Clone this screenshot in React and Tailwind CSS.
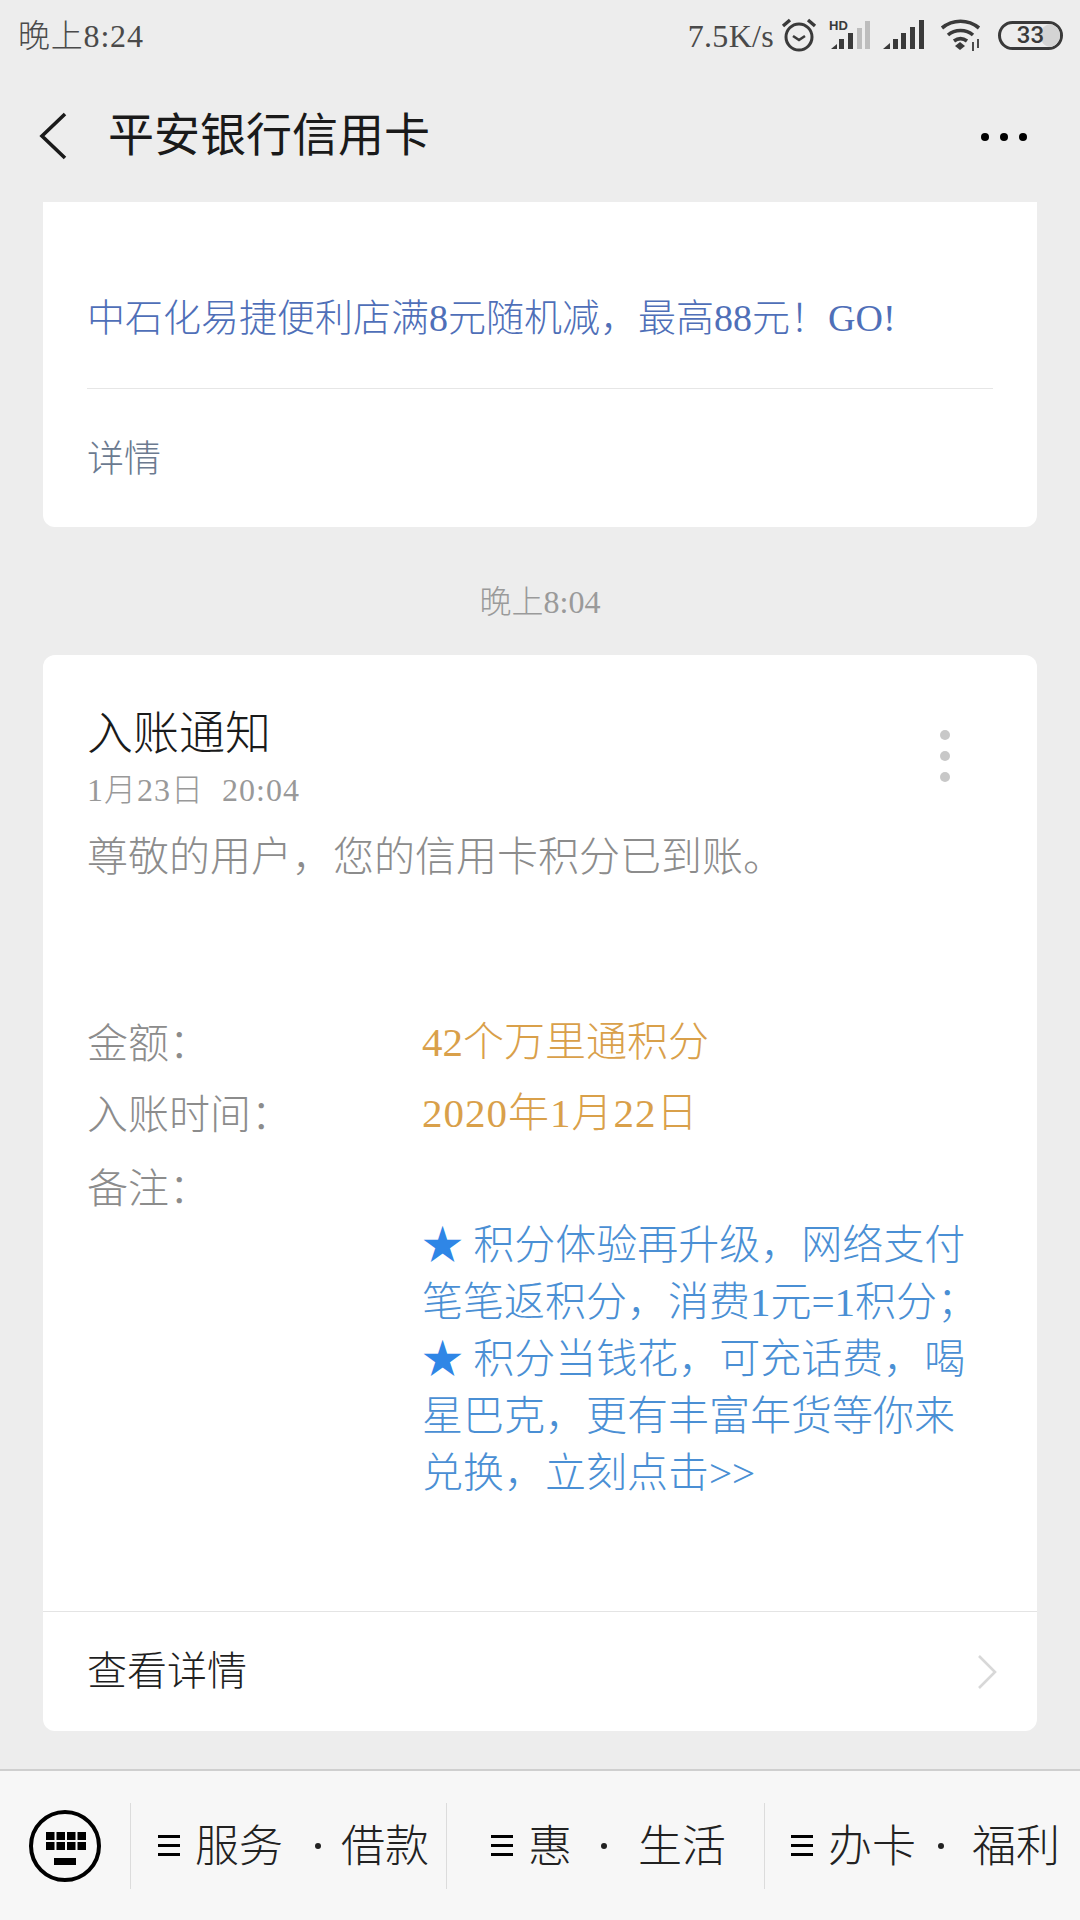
const MenuBars = () => (
    <span className="flex flex-col justify-between w-[22px] h-[21px] shrink-0">
        <span className="h-[3px] bg-black"></span>
        <span className="h-[3px] bg-black"></span>
        <span className="h-[3px] bg-black"></span>
    </span>
);

const StatusIcons = () => (
    <div className="flex items-center ml-[7px]">
        {/* alarm */}
        <svg width="36" height="36" viewBox="0 0 36 36" fill="none" stroke="#3a3a3a" strokeWidth="3">
            <circle cx="18" cy="20" r="13" />
            <path d="M12 19l6 4 6-4" strokeWidth="2.6" />
            <path d="M2 9l7-6M34 9l-7-6" strokeWidth="3.4" />
        </svg>
        {/* HD signal */}
        <svg className="ml-[12px]" width="42" height="32" viewBox="0 0 42 32" fill="#3a3a3a">
            <text x="0" y="11" fontSize="13" fontWeight="700" fontFamily="Liberation Sans">HD</text>
            <path d="M2 30l6-5v5z" />
            <rect x="10" y="20" width="5" height="10" />
            <rect x="19" y="14" width="5" height="16" />
            <rect x="28" y="9" width="5" height="21" fill="#bdbdbd" />
            <rect x="36" y="2" width="5" height="28" fill="#bdbdbd" />
        </svg>
        {/* signal */}
        <svg className="ml-[12px]" width="41" height="30" viewBox="0 0 41 30" fill="#3a3a3a">
            <path d="M0 29l7-6v6z" />
            <rect x="10" y="19" width="5" height="10" />
            <rect x="18" y="13" width="5" height="16" />
            <rect x="27" y="7" width="5" height="22" />
            <rect x="36" y="0" width="5" height="29" />
        </svg>
        {/* wifi */}
        <svg className="ml-[16px]" width="42" height="34" viewBox="0 0 42 34" fill="none" stroke="#3a3a3a" strokeWidth="3.6">
            <path d="M2 10c11-9 26-9 37 0" />
            <path d="M8 17c7-6 18-6 25 0" />
            <path d="M14 23c4-3 9-3 13 0" />
            <path d="M20 24l5 4-5 4-5-4z" fill="#3a3a3a" stroke="none" />
            <path d="M33 24v9M38 21v9" strokeWidth="1.8" />
        </svg>
        {/* battery */}
        <div className="relative ml-[16px] w-[65px] h-[29px] rounded-full border-[3px] border-[#3a3a3a] overflow-hidden flex items-center justify-center">
            <span className="absolute right-0 top-0 bottom-0 w-[20px] bg-[#d4d4d4] rounded-l-full"></span>
            <span className="relative text-[24px] leading-none font-medium text-[#3a3a3a] font-['Roboto',sans-serif]">33</span>
        </div>
    </div>
);

const BottomItem = ({left, right, gapA, gapB, gapC, width, pad}) => (
    <div className={`flex items-center h-full ${width} ${pad}`}>
        <MenuBars />
        <span className={`${gapA} pt-[4px]`}>{left}</span>
        <span className={`w-[6px] h-[6px] rounded-full bg-[#222] ${gapB}`}></span>
        <span className={`${gapC} pt-[4px]`}>{right}</span>
    </div>
);

const FieldRow = ({label, value, height, valueClass}) => (
    <div className={`flex items-center ${height}`}>
        <span className="w-[335px] text-[#8c8c8c]">
            {label}
            <span className="font-['Noto_Sans_CJK_TC',sans-serif]">：</span>
        </span>
        <span className={valueClass}>{value}</span>
    </div>
);

const App = () => {
    const noteLines = [
        {star: true, text: "积分体验再升级，网络支付"},
        {star: false, text: "笔笔返积分，消费1元=1积分；"},
        {star: true, text: "积分当钱花，可充话费，喝"},
        {star: false, text: "星巴克，更有丰富年货等你来"},
        {star: false, text: "兑换，立刻点击>>"},
    ];

    return (
        <div lang="zh-CN" className="w-[1080px] h-[1920px] flex flex-col overflow-hidden bg-[#ededed] font-['Liberation_Serif','Noto_Sans_CJK_SC',serif] font-light">
            <div className="h-[70px] shrink-0 flex items-center pl-[18px] pr-[17px] text-[32px] text-[#4a4a4a]">
                <span className="tracking-[0.8px] pt-[2px]">晚上8:24</span>
                <span className="ml-auto tracking-[0.3px] pt-[2px]">7.5K/s</span>
                <StatusIcons />
            </div>

            <div className="h-[132px] shrink-0 flex items-center">
                <svg className="ml-[38px]" width="30" height="48" viewBox="0 0 30 48" fill="none" stroke="#1a1a1a" strokeWidth="3.6">
                    <path d="M27 2L4 24l23 22" />
                </svg>
                <span className="ml-[40px] text-[46px] leading-none text-[#1a1a1a] font-normal">平安银行信用卡</span>
                <div className="ml-auto mr-[53px] mt-[2px] flex gap-[11px]">
                    <span className="w-[8px] h-[8px] rounded-full bg-black"></span>
                    <span className="w-[8px] h-[8px] rounded-full bg-black"></span>
                    <span className="w-[8px] h-[8px] rounded-full bg-black"></span>
                </div>
            </div>

            <div className="flex-1 min-h-0 overflow-hidden px-[43px]">
                <div className="bg-white rounded-b-[12px] px-[44px] pt-[86px] pb-[37px]">
                    <div className="h-[60px] flex items-center text-[38px] text-[#4f6fb8] whitespace-nowrap">
                        中石化易捷便利店满8元随机减，最高88元！GO!
                    </div>
                    <div className="h-px bg-[#e6e6e6] mt-[40px]"></div>
                    <div className="h-[60px] mt-[41px] flex items-center text-[37px] text-[#6b7a90]">详情</div>
                </div>

                <div className="h-[128px] pt-[22px] flex items-center justify-center text-[32px] text-[#9a9a9a]">晚上8:04</div>

                <div className="bg-white rounded-[12px] h-[1076px] flex flex-col">
                    <div className="relative pl-[44px] pr-[45px] pt-[52px] text-[41px]">
                        <div className="h-[52px] flex items-center text-[46px] text-[#1a1a1a]">入账通知</div>
                        <div className="h-[40px] mt-[11px] flex items-center text-[32px] tracking-[1px] text-[#999] whitespace-pre">1月23日  20:04</div>
                        <div className="h-[56px] mt-[20px] flex items-center text-[#8c8c8c]">尊敬的用户，您的信用卡积分已到账。</div>

                        <div className="absolute right-[87px] top-[75px] flex flex-col gap-[11px]">
                            <span className="w-[10px] h-[10px] rounded-full bg-[#c8c8c8]"></span>
                            <span className="w-[10px] h-[10px] rounded-full bg-[#c8c8c8]"></span>
                            <span className="w-[10px] h-[10px] rounded-full bg-[#c8c8c8]"></span>
                        </div>

                        <div className="mt-[121px]">
                            <FieldRow label="金额" value="42个万里通积分" height="h-[71px]" valueClass="text-[#d9a04a]" />
                            <FieldRow label="入账时间" value="2020年1月22日" height="h-[71px]" valueClass="text-[#d9a04a] tracking-[1px]" />
                            <FieldRow label="备注" value="" height="h-[68px] pt-[10px]" valueClass="" />
                        </div>

                        <div className="ml-[335px] text-[#4a8fd4] leading-[57px] whitespace-nowrap">
                            {noteLines.map((line, index) => (
                                <div key={index}>
                                    {line.star && <span className="text-[#2f86e6]">★ </span>}
                                    {line.text}
                                </div>
                            ))}
                        </div>
                    </div>

                    <div className="mt-auto h-[120px] border-t border-[#e4e4e4] flex items-center pl-[44px] pr-[39px] text-[40px] text-[#1f1f1f]">
                        <span>查看详情</span>
                        <svg className="ml-auto" width="22" height="36" viewBox="0 0 22 36" fill="none" stroke="#d8d8d8" strokeWidth="2.6">
                            <path d="M3 2l16 16L3 34" />
                        </svg>
                    </div>
                </div>
            </div>

            <div className="h-[151px] shrink-0 bg-[#f7f7f7] border-t-2 border-[#cfcfcf] flex items-center text-[44px] text-[#222]">
                <div className="w-[130px] flex items-center justify-center shrink-0">
                    <svg width="74" height="74" viewBox="0 0 74 74" fill="#000">
                        <circle cx="37" cy="37" r="34" fill="none" stroke="#000" strokeWidth="4" />
                        <rect x="18" y="23" width="8.5" height="8" />
                        <rect x="28.5" y="23" width="8.5" height="8" />
                        <rect x="39" y="23" width="8.5" height="8" />
                        <rect x="49.5" y="23" width="8.5" height="8" />
                        <rect x="18" y="33" width="8.5" height="8" />
                        <rect x="28.5" y="33" width="8.5" height="8" />
                        <rect x="39" y="33" width="8.5" height="8" />
                        <rect x="49.5" y="33" width="8.5" height="8" />
                        <rect x="26" y="49" width="22" height="7" />
                    </svg>
                </div>
                <div className="w-px h-[86px] bg-[#dcdcdc]"></div>
                <BottomItem left="服务" right="借款" width="w-[315px]" pad="pl-[27px]" gapA="ml-[15px]" gapB="ml-[32px]" gapC="ml-[20px]" />
                <div className="w-px h-[86px] bg-[#dcdcdc]"></div>
                <BottomItem left="惠" right="生活" width="w-[317px]" pad="pl-[44px]" gapA="ml-[15px]" gapB="ml-[29px]" gapC="ml-[31px]" />
                <div className="w-px h-[86px] bg-[#dcdcdc]"></div>
                <BottomItem left="办卡" right="福利" width="w-[315px]" pad="pl-[26px]" gapA="ml-[15px]" gapB="ml-[22px]" gapC="ml-[28px]" />
            </div>
        </div>
    );
};

export default App;
